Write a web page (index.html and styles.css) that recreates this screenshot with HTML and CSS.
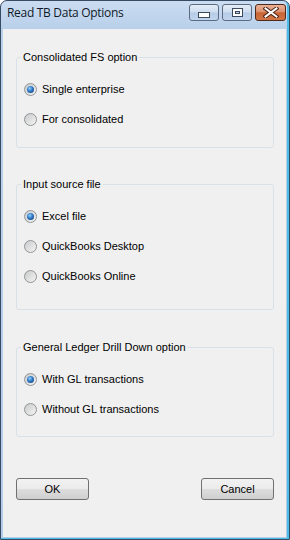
FILE: index.html
```html
<!DOCTYPE html>
<html lang="en">
<head>
  <meta charset="UTF-8">
  <title>Read TB Data Options</title>
  <link rel="stylesheet" href="styles.css">
</head>
<body>

<div class="window">
  <div class="titlebar">
    <span class="title">Read TB Data Options</span>
    <div class="controls">
      <div class="ctl">
        <svg width="12" height="6" viewBox="0 0 12 6"><rect x="0.5" y="0.5" width="11" height="5" fill="#fff" stroke="#3c4a5c"/></svg>
      </div>
      <div class="ctl">
        <svg width="11" height="9" viewBox="0 0 11 9"><rect x="0.5" y="0.5" width="10" height="8" fill="#fff" stroke="#3c4a5c"/><rect x="3.5" y="3.5" width="4" height="2" fill="#b9cde6" stroke="#3c4a5c"/></svg>
      </div>
      <div class="ctl close">
        <svg width="16" height="11" viewBox="0 0 16 11">
          <path d="M2.5 1.5 L13.5 9.5 M13.5 1.5 L2.5 9.5" stroke="#4a2418" stroke-width="4" stroke-linecap="square"/>
          <path d="M2.5 1.5 L13.5 9.5 M13.5 1.5 L2.5 9.5" stroke="#fff" stroke-width="2" stroke-linecap="square"/>
        </svg>
      </div>
    </div>
  </div>

  <div class="client">
    <fieldset class="group group-fs">
      <legend>Consolidated FS option</legend>
      <div class="option"><span class="radio on"></span>Single enterprise</div>
      <div class="option"><span class="radio"></span>For consolidated</div>
    </fieldset>

    <fieldset class="group group-src">
      <legend>Input source file</legend>
      <div class="option"><span class="radio on"></span>Excel file</div>
      <div class="option"><span class="radio"></span>QuickBooks Desktop</div>
      <div class="option"><span class="radio"></span>QuickBooks Online</div>
    </fieldset>

    <fieldset class="group group-gl">
      <legend>General Ledger Drill Down option</legend>
      <div class="option"><span class="radio on"></span>With GL transactions</div>
      <div class="option"><span class="radio"></span>Without GL transactions</div>
    </fieldset>

    <div class="buttons">
      <button>OK</button>
      <button>Cancel</button>
    </div>
  </div>
</div>

</body>
</html>
```

FILE: styles.css
```css
body {
  margin: 0;
  font-family: "Liberation Sans", Arial, sans-serif;
  font-size: 11px;
  color: #000;
}

.window {
  width: 290px;
  height: 540px;
  box-sizing: border-box;
  border: 1px solid #364a63;
  border-radius: 7px 7px 0 0;
  background: linear-gradient(#cadcf1, #b9d0ea 28px, #b4cce8);
  box-shadow: inset -2px -1px 0 #4dbde6;
  display: flex;
  flex-direction: column;
}

.titlebar {
  height: 28px;
  display: flex;
  justify-content: space-between;
  padding-left: 6px;
}

.title {
  font-family: "Open Sans", "Noto Sans", sans-serif;
  font-size: 12px;
  letter-spacing: -0.3px;
  color: #111a28;
  line-height: 24px;
}

.controls {
  display: flex;
  gap: 3px;
  margin: 3px 3px 0 0;
}

.ctl {
  width: 30px;
  height: 17px;
  box-sizing: border-box;
  border: 1px solid #5a6b82;
  border-radius: 3px;
  background: linear-gradient(#e4edf8 0%, #cddcef 48%, #b6cbe6 52%, #c2d5ee 100%);
  display: flex;
  align-items: center;
  justify-content: center;
}

.ctl:first-child svg {
  margin-top: 4px;
}

.ctl.close {
  width: 31px;
  border-color: #4e2a1e;
  background: linear-gradient(#eab095 0%, #dc9272 45%, #c96535 52%, #d17544 100%);
}

.client {
  flex: 1;
  margin: 0 3px 2px 2px;
  background: #f0f0f0;
  padding: 22px 12px 0 13px;
}

.group {
  margin: 0;
  padding: 10px 7px 13px 7px;
  border: 1px solid #d8e1e8;
  border-radius: 3px;
}

.group legend {
  font-size: 11px;
  line-height: 13px;
  padding: 0 2px;
  margin-left: -3px;
  color: #000;
}

.group-src {
  margin-top: 30px;
  padding-bottom: 18px;
}

.group-gl {
  margin-top: 31px;
  padding-bottom: 12px;
}

.option {
  height: 30px;
  display: flex;
  align-items: center;
  gap: 5px;
}

.radio {
  width: 13px;
  height: 13px;
  box-sizing: border-box;
  border-radius: 50%;
  border: 1px solid #929496;
  background: linear-gradient(135deg, #c9cacb, #f4f4f4);
  display: flex;
  align-items: center;
  justify-content: center;
}

.radio.on::after {
  content: "";
  width: 7px;
  height: 7px;
  border-radius: 50%;
  background: radial-gradient(circle at 40% 35%, #8fd2ff 0%, #2f77c4 45%, #123769 100%);
}

.buttons {
  margin-top: 41px;
  display: flex;
  justify-content: space-between;
}

.buttons button {
  width: 73px;
  height: 22px;
  font-family: "Liberation Sans", Arial, sans-serif;
  font-size: 11px;
  color: #000;
  border: 1px solid #707070;
  border-radius: 3px;
  background: linear-gradient(#f2f2f2 0%, #ebebeb 48%, #dddddd 52%, #cfcfcf 100%);
  padding: 0;
}
```
